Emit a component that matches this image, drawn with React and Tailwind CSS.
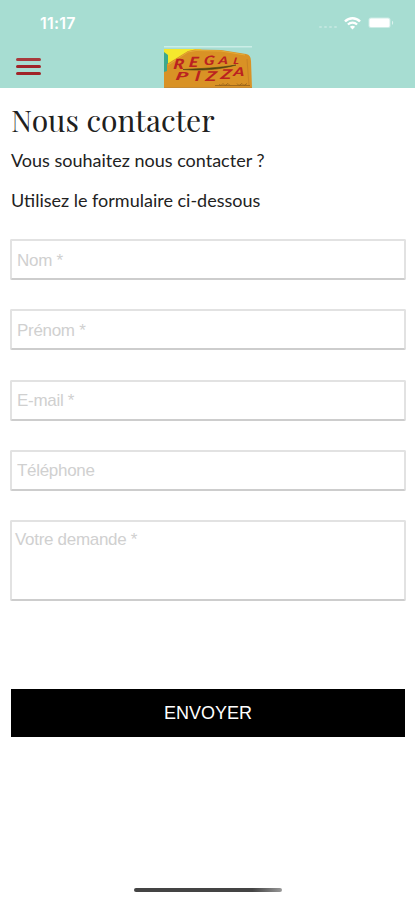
import React from "react";

const fieldBorder =
  "block w-full rounded-[2px] border-2 border-[#e2e2e2] border-b-[#cdcdcd] bg-white font-['Liberation_Sans',Arial,sans-serif] text-[17px] tracking-[-0.3px] text-gray-700 placeholder:text-[#d0d0d0] placeholder:opacity-100 outline-none";

const logoLetters = [
  { char: "R", x: 9, y: 22.5, size: 14, stretch: 1.25 },
  { char: "E", x: 24.5, y: 20.5, size: 14, stretch: 1.25 },
  { char: "G", x: 39.5, y: 19, size: 13, stretch: 1.2 },
  { char: "A", x: 54, y: 18, size: 10.5, stretch: 1.4 },
  { char: "L", x: 69, y: 17.5, size: 9, stretch: 1.3 },
  { char: "P", x: 11, y: 34, size: 11, stretch: 1.9 },
  { char: "I", x: 30.5, y: 35, size: 14, stretch: 1.3 },
  { char: "Z", x: 41, y: 35, size: 13.5, stretch: 1.45 },
  { char: "Z", x: 56, y: 32.5, size: 13.5, stretch: 1.45 },
  { char: "A", x: 69, y: 29.5, size: 12, stretch: 1.4 },
];

function StatusBar() {
  return (
    <div className="flex h-[46px] items-center justify-between pl-[40px] pr-[21px] text-white">
      <span className="font-[Inter,sans-serif] text-[16px] font-semibold leading-none tracking-[0.2px]">
        11:17
      </span>
      <div className="flex items-center">
        <div className="mr-[7px] mt-[7px] flex gap-[2px]">
          <i className="h-[2px] w-[3px] rounded-full bg-white/30" />
          <i className="h-[2px] w-[3px] rounded-full bg-white/30" />
          <i className="h-[2px] w-[3px] rounded-full bg-white/30" />
          <i className="h-[2px] w-[3px] rounded-full bg-white/30" />
        </div>
        <svg width="17" height="13" viewBox="0 0 17 13" fill="none" stroke="white" className="mr-[7px]">
          <path d="M1 4.5C5.2.2 11.8.2 16 4.5" strokeWidth="2.5" />
          <path d="M3.9 7.5C6.5 5 10.5 5 13.1 7.5" strokeWidth="2.2" />
          <path d="M8.5 12.5 5.9 9.8C7.3 8.5 9.7 8.5 11.1 9.8Z" fill="white" stroke="none" />
        </svg>
        <svg width="26" height="12" viewBox="0 0 26 12">
          <rect x="0.5" y="0.5" width="22" height="10.5" rx="2.5" fill="white" fillOpacity="0.45" />
          <rect x="1.5" y="1.5" width="20" height="8.5" rx="1.5" fill="white" />
          <path d="M24 3.7c1.6.7 1.6 3.5 0 4.2Z" fill="white" fillOpacity="0.6" />
        </svg>
      </div>
    </div>
  );
}

function Logo() {
  return (
    <svg width="88" height="42" viewBox="0 0 88 42" className="block">
      <rect width="88" height="42" fill="#a7ddd2" />
      <rect width="88" height="1.5" fill="#cceee7" />
      <path d="M0 3H38L20 14 0 24Z" fill="#f5e82d" />
      <path d="M0 6 4 9V27L0 32Z" fill="#3da88c" />
      <path d="M3 18 24 5 31 3.5 57 4 82 8Q87 9 87 15L88 42H0V26L3 25Z" fill="#d99225" />
      <path d="M4 19 24 6 32 4.5 57 5 81 9" fill="none" stroke="#e5aa36" />
      <path d="M83 13 85 40" fill="none" stroke="#c98324" />
      <path d="M19 23.5C36 22.5 56 22 72 19C57 23.5 37 25 19 23.5Z" fill="#514510" stroke="#514510" strokeWidth="0.6" />
      <g fill="#bb2220" fontFamily="Lato, sans-serif" fontWeight="900" fontStyle="italic">
        {logoLetters.map(({ char, x, y, size, stretch }, index) => (
          <text key={index} fontSize={size} transform={`translate(${x} ${y}) scale(${stretch} 1) skewX(-6)`}>
            {char}
          </text>
        ))}
      </g>
      <path d="M51 39.5H86M55 38.5l2 1 2-2 2 2 3-2 2 2m7-2 2 2 3-2 2 2 3-2" fill="none" stroke="#93601b" strokeWidth="0.8" />
      <path d="M0 41.5H88" stroke="#c58a35" />
    </svg>
  );
}

export default function App() {
  return (
    <main className="flex h-[900px] w-[415px] flex-col overflow-hidden bg-white">
      <header className="flex h-[88px] shrink-0 flex-col bg-[#a7ddd2]">
        <StatusBar />
        <div className="grid h-[42px] grid-cols-[164px_88px_1fr]">
          <button aria-label="Menu" className="ml-[16px] mt-[12px] flex h-[17px] w-[25px] flex-col justify-between">
            <span className="h-[3px] w-full rounded-full bg-[#a83a3c]" />
            <span className="h-[3px] w-full rounded-full bg-[#a02428]" />
            <span className="h-[3px] w-full rounded-full bg-[#a02428]" />
          </button>
          <Logo />
        </div>
      </header>

      <section className="flex flex-col pl-[10px] pr-[9px]">
        <h1 className="mt-[12px] h-[40px] whitespace-nowrap pl-[1px] font-['Playfair_Display','Liberation_Serif',serif] text-[30px] leading-[40px] text-[#202020]">
          Nous contacter
        </h1>
        <p className="mt-[8px] h-[24px] whitespace-nowrap pl-[1px] font-[Lato,sans-serif] text-[18px] leading-[24px] text-[#222]">
          Vous souhaitez nous contacter ?
        </p>
        <p className="mt-[16px] h-[24px] whitespace-nowrap pl-[1px] font-[Lato,sans-serif] text-[18px] leading-[24px] text-[#222]">
          Utilisez le formulaire ci-dessous
        </p>

        <form className="mt-[27px] flex flex-col" onSubmit={(e) => e.preventDefault()}>
          <div className="flex flex-col gap-[29.3px]">
            <input className={`${fieldBorder} h-[41px] px-[5px] pt-[2px]`} placeholder="Nom *" />
            <input className={`${fieldBorder} h-[41px] px-[5px] pt-[2px]`} placeholder="Prénom *" />
            <input className={`${fieldBorder} h-[41px] px-[5px] pt-[2px]`} placeholder="E-mail *" />
            <input className={`${fieldBorder} h-[41px] px-[5px] pt-[2px]`} placeholder="Téléphone" />
            <textarea className={`${fieldBorder} h-[81px] resize-none px-[3px] py-[8px] leading-[20px]`} placeholder="Votre demande *" />
          </div>
          <button className="ml-[1px] mr-[1px] mt-[87.8px] h-[48px] bg-black pt-[2px] font-['Liberation_Sans',Arial,sans-serif] text-[18px] text-white">
            ENVOYER
          </button>
        </form>
      </section>

      <div className="mx-auto mb-[8px] mt-auto h-[4px] w-[148px] rounded-full bg-linear-to-r from-[#444] from-80% to-[#999]" />
    </main>
  );
}
